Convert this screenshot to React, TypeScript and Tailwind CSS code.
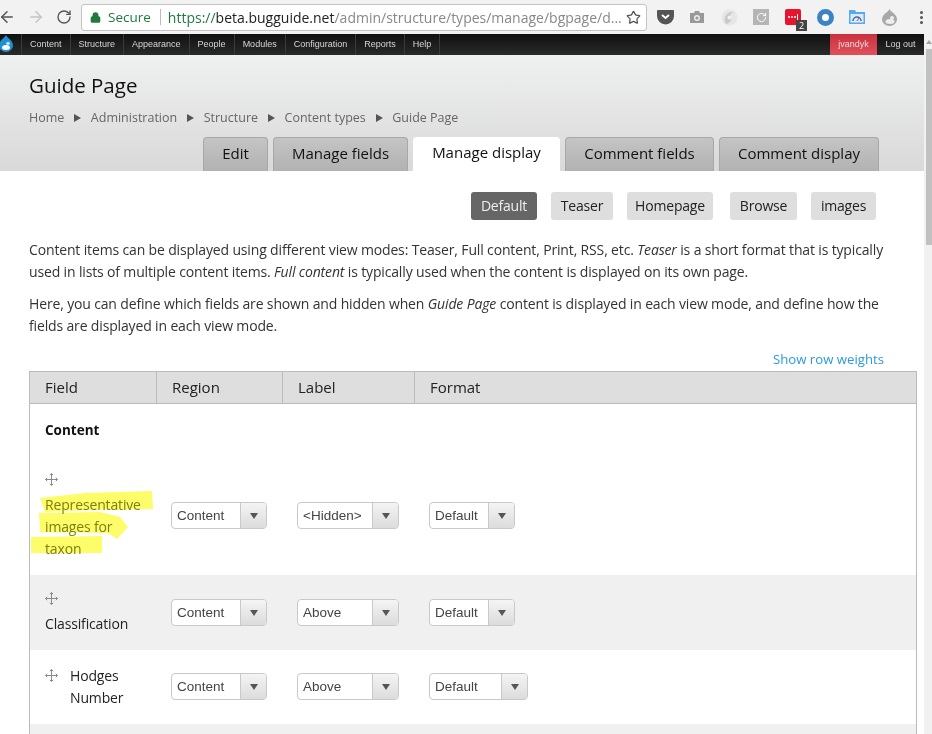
import React from 'react';
import { ArrowLeft, ArrowRight, RotateCw, Lock, Star } from 'lucide-react';

const nav = ['Content', 'Structure', 'Appearance', 'People', 'Modules', 'Configuration', 'Reports', 'Help'];
const crumbs = ['Home', 'Administration', 'Structure', 'Content types', 'Guide Page'];

const modes = [
  { label: 'Default', w: 'w-[66px]', gap: 'ml-0' },
  { label: 'Teaser', w: 'w-[62px]', gap: 'ml-[14px]' },
  { label: 'Homepage', w: 'w-[86px]', gap: 'ml-[14px]' },
  { label: 'Browse', w: 'w-[67px]', gap: 'ml-[17px]' },
  { label: 'images', w: 'w-[65px]', gap: 'ml-[14px]' },
];

const tabs = [
  { label: 'Edit', w: 'w-[65px]' },
  { label: 'Manage fields', w: 'w-[135px]' },
  { label: 'Manage display', w: 'w-[147px]', active: true },
  { label: 'Comment fields', w: 'w-[149px]' },
  { label: 'Comment display', w: 'w-[160px]' },
];

const Select = ({ value, w }: { value: string; w: string }) => (
  <div className={`${w} h-[27px] flex border border-[#c9c9c9] rounded-[4px] bg-white font-['Liberation_Sans',sans-serif] text-[13.5px] text-[#444] overflow-hidden`}>
    <div className="flex-1 pl-[5px] leading-[25px]">{value}</div>
    <div className="w-[26px] flex items-center justify-center border-l border-[#c9c9c9] bg-gradient-to-b from-[#f4f4f4] to-[#dcdcdc]">
      <div className="w-0 h-0 border-x-[4.5px] border-x-transparent border-t-[6px] border-t-[#555]" />
    </div>
  </div>
);

const DragHandle = () => (
  <svg className="shrink-0" width="13" height="13" viewBox="0 0 13 13" fill="none" stroke="#8a8a8a" strokeWidth="1">
    <path d="M6.5 0.5v12M0.5 6.5h12" />
    <path d="M4.8 2.2 6.5 0.5l1.7 1.7M4.8 10.8l1.7 1.7 1.7-1.7M2.2 4.8 0.5 6.5l1.7 1.7M10.8 4.8l1.7 1.7-1.7 1.7" />
  </svg>
);

const Row = ({ h, shaded, label, indent, marked, region, lbl, fmtW }: {
  h: string; shaded?: boolean; label: string; indent?: boolean; marked?: boolean; region: string; lbl: string; fmtW: string;
}) => (
  <div className={`${h} flex items-center ${shaded ? 'bg-[#f0f0f0]' : 'bg-white'}`}>
    <div className={`w-[126px] pl-[15px] ${indent ? 'flex gap-[12px] mt-[4px]' : 'mt-[1px]'}`}>
      <DragHandle />
      <div className={`w-[100px] text-[14px] leading-[22px] tracking-[-0.15px] ${marked ? 'text-[#7f7f1e]' : 'text-[#222]'} ${indent ? '-mt-[4px]' : 'mt-[8px]'}`}>{label}</div>
    </div>
    <div className="w-[126px] pl-[15px]"><Select value={region} w="w-[96px]" /></div>
    <div className="w-[132px] pl-[15px]"><Select value={lbl} w="w-[102px]" /></div>
    <div className="pl-[15px]"><Select value="Default" w={fmtW} /></div>
  </div>
);

export default function App() {
  return (
    <div className="relative w-[932px] h-[734px] overflow-hidden bg-white font-['Open_Sans',sans-serif] text-[#222]">
      {/* browser chrome */}
      <div className="h-[34px] bg-[#f2f2f2] flex items-center overflow-hidden">
        <ArrowLeft size={18} className="ml-[-2px] shrink-0 text-[#555]" />
        <ArrowRight size={18} className="ml-[11px] shrink-0 text-[#c4c4c4]" />
        <RotateCw size={16} className="ml-[11px] shrink-0 text-[#555]" />
        <div className="ml-[9px] w-[566px] shrink-0 h-[27px] bg-white border border-[#c4c4c4] rounded-[3px] flex items-center text-[14px] whitespace-nowrap overflow-hidden">
          <Lock size={11} strokeWidth={3} className="ml-[8px] text-[#1f7a3e]" fill="#1f7a3e" />
          <span className="ml-[7px] text-[13.5px] text-[#1f7a3e]">Secure</span>
          <span className="ml-[9px] mr-[7px] w-px h-[16px] bg-[#bbb]" />
          <span className="text-[#1f7a3e]">https://</span>
          <span className="text-[#222]">beta.bugguide.net</span>
          <span className="text-[#888]">/admin/structure/types/manage/bgpage/d...</span>
          <Star size={15} className="ml-auto mr-[5px] shrink-0 text-[#555]" />
        </div>
        <div className="ml-[2px] shrink-0 flex items-center">
          <div className="w-[32px] flex justify-center">
            <svg width="17" height="16" viewBox="0 0 17 16"><path d="M1 1h15a1 1 0 0 1 1 1v5a8 8 0 0 1-17 0V2a1 1 0 0 1 1-1z" fill="#555" /><path d="M5 6l3.5 3L12 6" stroke="#fff" strokeWidth="2" fill="none" /></svg>
          </div>
          <div className="w-[32px] flex justify-center">
            <svg width="16" height="14" viewBox="0 0 16 14"><path d="M1 3h4l1-2h4l1 2h4v10H1z" fill="#999" /><circle cx="8" cy="8" r="3" fill="#eee" /><circle cx="8" cy="8" r="1.6" fill="#999" /></svg>
          </div>
          <div className="w-[32px] flex justify-center">
            <svg width="17" height="17" viewBox="0 0 17 17"><circle cx="8.5" cy="8.5" r="8" fill="#e6e6e6" /><path d="M5 15C1 9 6 2 13 3c-4 1-4 3-3 5 1 3-1 6-5 7z" fill="#c8c8c8" /><circle cx="8.5" cy="8.5" r="2" fill="#f2f2f2" /></svg>
          </div>
          <div className="w-[32px] flex justify-center">
            <div className="w-[16px] h-[16px] bg-[#b5b5b5] flex items-center justify-center"><RotateCw size={11} className="text-white" /></div>
          </div>
          <div className="w-[32px] flex justify-center">
            <div className="relative w-[16px] h-[16px] rounded-[2px] bg-[#e8132c] flex items-center justify-center gap-[1px]">
              <span className="w-[2px] h-[2px] bg-white rounded-full" />
              <span className="w-[2px] h-[2px] bg-white rounded-full" />
              <span className="w-[2px] h-[2px] bg-white rounded-full" />
              <span className="w-px h-[6px] bg-white" />
              <span className="absolute left-[11px] top-[11px] w-[11px] h-[11px] bg-[#444] text-white text-center text-[9px] leading-[11px]">2</span>
            </div>
          </div>
          <div className="w-[32px] flex justify-center">
            <div className="w-[17px] h-[17px] rounded-full border-[5px] border-[#3c82c4] bg-white" />
          </div>
          <div className="w-[32px] flex justify-center">
            <svg width="16" height="14" viewBox="0 0 16 14"><path d="M0 0h6l1 2h9v12H0z" fill="#5aa9ea" /><rect x="1.5" y="4" width="13" height="8.5" fill="#d9ecfb" /><path d="M4 11a4 4 0 0 1 8 0" fill="none" stroke="#3a6ea5" strokeWidth="1.5" /><path d="M8 11l2-3" stroke="#d33" strokeWidth="1" /></svg>
          </div>
          <div className="w-[32px] flex justify-center">
            <svg width="15" height="17" viewBox="0 0 15 17"><path d="M7.5 0c1 3 7.5 5 7.5 10.5a7.5 6.5 0 0 1-15 0C0 5 6.500 3 7.500 0z" fill="#a8a8a8" /><ellipse cx="8" cy="12.500" rx="4.500" ry="2.500" fill="#eee" /><circle cx="10" cy="9" r="2" fill="#eee" /></svg>
          </div>
          <div className="w-[32px] flex flex-col items-center gap-[2px]">
            <span className="w-[3px] h-[3px] bg-[#555] rounded-full" />
            <span className="w-[3px] h-[3px] bg-[#555] rounded-full" />
            <span className="w-[3px] h-[3px] bg-[#555] rounded-full" />
          </div>
        </div>
      </div>

      {/* admin toolbar */}
      <div className="h-[21px] bg-gradient-to-b from-[#111] to-[#2a2a2a] flex font-['Liberation_Sans',sans-serif] text-[9px] leading-[21px] text-[#d6d6d6]">
        <div className="w-[22px] border-r border-[#3a3a3a] overflow-hidden">
          <svg width="14" height="17" viewBox="0 0 14 17" className="mt-[1px] -ml-[1px]"><path d="M7 0c1 3 7 5 7 10.500a7 6.500 0 0 1-14 0C0 5 6 3 7 0z" fill="#1f8fd2" /><ellipse cx="7" cy="12.500" rx="4" ry="2.500" fill="#fff" /><circle cx="9" cy="8.500" r="1.800" fill="#bfe3f7" /></svg>
        </div>
        {nav.map(n => (
          <div key={n} className="px-[8px] border-r border-[#3a3a3a]">{n}</div>
        ))}
        <div className="ml-auto mr-[8px] flex">
          <div className="w-[47px] text-center bg-gradient-to-b from-[#c9303e] to-[#e0505c] text-[#f3d6d8]">jvandyk</div>
          <div className="w-[47px] text-center">Log out</div>
        </div>
      </div>

      {/* page header */}
      <div className="h-[116px] bg-gradient-to-b from-[#eff0f0] to-[#d9d9d9] pl-[29px] pr-[53px] flex flex-col">
        <div className="mt-[14px] text-[20.500px] leading-[32px] text-[#111]">Guide Page</div>
        <div className="mt-[7px] flex items-center text-[12.500px] leading-[20px] text-[#666]">
          {crumbs.map((c, i) => (
            <React.Fragment key={c}>
              {i > 0 && <span className="mx-[9.750px] w-0 h-0 border-y-[4px] border-y-transparent border-l-[7px] border-l-[#555]" />}
              <span>{c}</span>
            </React.Fragment>
          ))}
        </div>
        <div className="mt-auto flex justify-end gap-[5px]">
          {tabs.map(t => (
            <div key={t.label} className={`${t.w} h-[34px] text-center text-[15px] leading-[31px] rounded-t-[4px] ${t.active ? 'bg-white text-[#111]' : 'bg-gradient-to-b from-[#c4c4c4] to-[#b2b2b2] border border-b-0 border-[#a8a8a8] text-[#111]'}`}>
              {t.label}
            </div>
          ))}
        </div>
      </div>

      {/* view modes */}
      <div className="mt-[21px] pr-[56px] flex justify-end">
        {modes.map((m, i) => (
          <div key={m.label} className={`${m.w} ${m.gap} h-[28px] text-center rounded-[3px] text-[14px] tracking-[-0.2px] leading-[28px] ${i === 0 ? 'bg-[#666] text-[#eee]' : 'bg-[#dedede] text-[#222]'}`}>{m.label}</div>
        ))}
      </div>

      <div className="mt-[19px] ml-[29px] w-[860px] text-[14px] leading-[22px] tracking-[-0.15px] text-[#333]">
        <p>Content items can be displayed using different view modes: Teaser, Full content, Print, RSS, etc. <em>Teaser</em> is a short format that is typically used in lists of multiple content items. <em>Full content</em> is typically used when the content is displayed on its own page.</p>
        <p className="mt-[10px]">Here, you can define which fields are shown and hidden when <em>Guide Page</em> content is displayed in each view mode, and define how the fields are displayed in each view mode.</p>
      </div>

      <div className="mt-[12px] pr-[48px] text-right text-[13.200px] leading-[20px] text-[#2a9be0]">Show row weights</div>

      {/* fields table */}
      <div className="mt-[2px] ml-[29px] w-[888px] border-x border-[#bbb]">
        <div className="h-[33px] flex bg-[#dedede] border-y border-[#bbb] text-[15px] leading-[31px] text-[#222]">
          <div className="w-[127px] pl-[15px] border-r border-[#bbb]">Field</div>
          <div className="w-[126px] pl-[15px] border-r border-[#bbb]">Region</div>
          <div className="w-[132px] pl-[15px] border-r border-[#bbb]">Label</div>
          <div className="pl-[15px]">Format</div>
        </div>
        <div className="h-[54px] pl-[15px] pt-[15px] text-[13.500px] leading-[22px] font-bold text-[#111]">Content</div>
        <Row h="h-[117px] pb-[2px]" marked label="Representative images for taxon" region="Content" lbl="<Hidden>" fmtW="w-[86px]" />
        <Row h="h-[75px]" shaded label="Classification" region="Content" lbl="Above" fmtW="w-[86px]" />
        <Row h="h-[74px] pb-[1px]" indent label="Hodges Number" region="Content" lbl="Above" fmtW="w-[99px]" />
        <div className="h-[40px] bg-[#f0f0f0]" />
      </div>

      {/* hand drawn highlighter marks */}
      <svg className="absolute left-0 top-0 pointer-events-none mix-blend-multiply" width="932" height="734">
        <path d="M40 498 L85 493 L152 491 L153 509 L90 510 L45 512 Z M39 513 L100 512 L120 517 L128 527 L117 539 L108 533 L40 532 Z M31 537 L102 536 L102 553 L31 553 Z" fill="#fdfd6a" />
      </svg>

      {/* page scrollbar */}
      <div className="absolute right-0 top-[34px] bottom-0 w-[8px] bg-[#f1f1f1] pl-[2px]">
        <div className="h-[15px] flex justify-center pt-[6px]">
          <div className="w-0 h-0 border-x-[3px] border-x-transparent border-b-[4px] border-b-[#a3a3a3]" />
        </div>
        <div className="h-[196px] bg-[#c1c1c1]" />
      </div>
    </div>
  );
}
